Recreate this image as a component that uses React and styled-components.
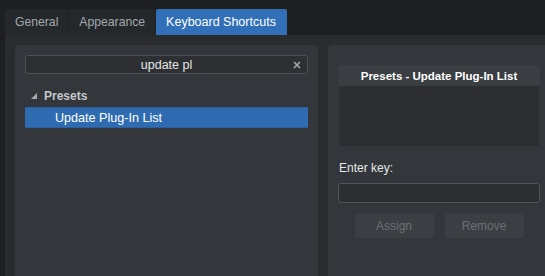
import React from 'react'
import styled, { createGlobalStyle } from 'styled-components'

const GlobalStyle = createGlobalStyle`
    html, body {
        margin: 0;
        padding: 0;
        background: #1e1f21;
        font-family: "Liberation Sans", Arial, sans-serif;
        overflow: hidden;
    }
`

const Window = styled.div`
    width: 545px;
    height: 276px;
    padding: 9px 0 0 5px;
    box-sizing: border-box;
    display: flex;
    flex-direction: column;
    overflow: hidden;
`

const TabBar = styled.div`
    display: flex;
    height: 26px;
`

const Tab = styled.div`
    display: flex;
    align-items: center;
    padding: 0 10px;
    font-size: ${p => (p.active ? 12.5 : 12.2)}px;
    color: ${p => (p.active ? '#ffffff' : '#a2a8ae')};
    background: ${p => (p.active ? '#3170b8' : '#25282b')};
    border-right: 1px solid ${p => (p.active ? '#3170b8' : '#1f2124')};
    border-radius: 2px 2px 0 0;
`

const Content = styled.div`
    flex: 1;
    display: flex;
    gap: 10px;
    padding: 10px 0 0 10px;
    background: #2a2b2d;
    overflow: hidden;
`

const Panel = styled.div`
    background: #33363a;
    border-radius: 4px 4px 0 0;
    box-sizing: border-box;
    display: flex;
    flex-direction: column;
    flex-shrink: 0;
    width: ${p => p.width}px;
    padding: ${p => p.pad};
`

const Search = styled.div`
    position: relative;
    height: 19px;
    border: 1px solid #4c4f53;
    border-radius: 3px;
    background: #2d2f32;
    box-sizing: border-box;
    display: flex;
    align-items: center;
    justify-content: center;
    font-size: 12.5px;
    color: #e4e6e8;
`

const Clear = styled.svg`
    position: absolute;
    right: 6px;
    top: 5px;
`

const TreeHeader = styled.div`
    display: flex;
    align-items: center;
    height: 20px;
    margin-top: 12px;
    padding-left: 6px;
    gap: 7px;
    font-size: 12px;
    font-weight: bold;
    color: #c3c7cb;
`

const TreeItem = styled.div`
    display: flex;
    align-items: center;
    height: 21px;
    margin-top: 1px;
    padding-left: 30px;
    box-sizing: border-box;
    font-size: 12.6px;
    color: #ffffff;
    background: ${p => (p.selected ? '#2f6bb1' : 'transparent')};
    border-top: 1px solid ${p => (p.selected ? '#2a5e9e' : 'transparent')};
    border-bottom: 1px solid ${p => (p.selected ? '#2a5e9e' : 'transparent')};
`

const Box = styled.div`
    display: flex;
    flex-direction: column;
    border-radius: 4px 4px 0 0;
    overflow: hidden;
`

const BoxTitle = styled.div`
    height: 21px;
    display: flex;
    align-items: center;
    justify-content: center;
    background: #3a3d41;
    font-size: 11.5px;
    font-weight: bold;
    color: #ffffff;
`

const BoxBody = styled.div`
    height: 60px;
    background: #2c2e31;
    margin: 0 1px;
`

const Label = styled.div`
    margin-top: 15px;
    padding-left: 1px;
    font-size: 12px;
    color: #e8eaec;
    height: 14px;
`

const KeyInput = styled.div`
    margin-top: 8px;
    height: 18px;
    border: 1px solid #505357;
    border-radius: 3px;
    background: #2c2e31;
`

const Buttons = styled.div`
    display: flex;
    justify-content: center;
    gap: 11px;
    margin-top: 10px;
`

const Button = styled.div`
    width: 79px;
    height: 25px;
    border-radius: 3px;
    background: #3b3e42;
    display: flex;
    align-items: center;
    justify-content: center;
    font-size: 12px;
    color: #6c7075;
`

export default function App() {
    return (
        <React.Fragment>
            <GlobalStyle />
            <Window>
                <TabBar>
                    <Tab>General</Tab>
                    <Tab>Appearance</Tab>
                    <Tab active>Keyboard Shortcuts</Tab>
                </TabBar>
                <Content>
                    <Panel width={303} pad="10px">
                        <Search>
                            update pl
                            <Clear width="8" height="8" viewBox="0 0 8 8">
                                <path d="M1 1 L7 7 M7 1 L1 7" stroke="#a3a6aa" strokeWidth="1.6" />
                            </Clear>
                        </Search>
                        <TreeHeader>
                            <svg width="6" height="6" viewBox="0 0 6 6">
                                <polygon points="6,0 6,6 0,6" fill="#a8acb0" />
                            </svg>
                            Presets
                        </TreeHeader>
                        <TreeItem selected>Update Plug-In List</TreeItem>
                    </Panel>
                    <Panel width={222} pad="20px 10px 0 10px">
                        <Box>
                            <BoxTitle>Presets - Update Plug-In List</BoxTitle>
                            <BoxBody />
                        </Box>
                        <Label>Enter key:</Label>
                        <KeyInput />
                        <Buttons>
                            <Button>Assign</Button>
                            <Button>Remove</Button>
                        </Buttons>
                    </Panel>
                </Content>
            </Window>
        </React.Fragment>
    )
}
